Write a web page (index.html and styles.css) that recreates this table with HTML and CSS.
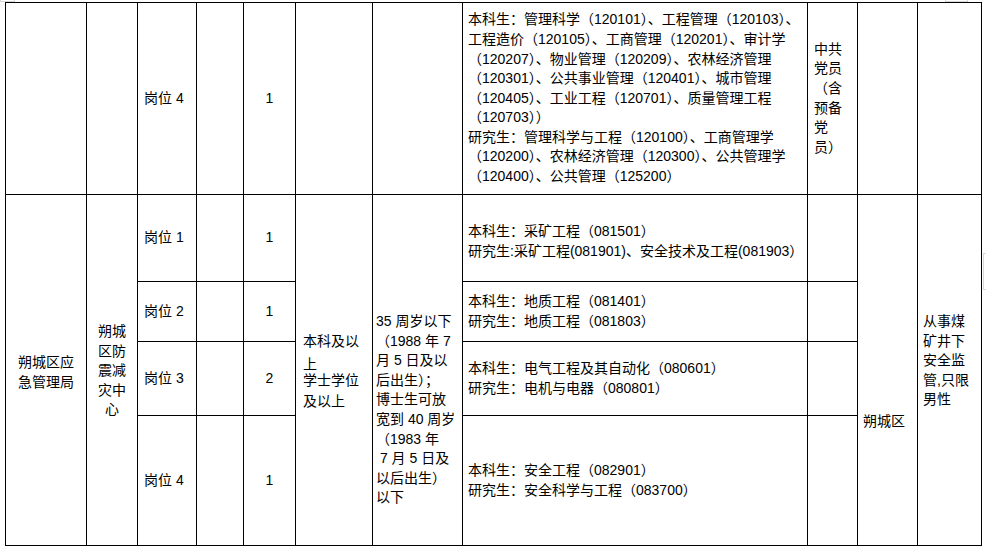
FILE: index.html
```html
<!DOCTYPE html>
<html lang="zh-CN">
<head>
<meta charset="utf-8">
<title>岗位表</title>
<link rel="stylesheet" href="styles.css">
</head>
<body>
<div class="sheet">
  <!-- row 1 -->
  <div class="cell"></div>
  <div class="cell"></div>
  <div class="cell post">岗位 4</div>
  <div class="cell"></div>
  <div class="cell num">1</div>
  <div class="cell"></div>
  <div class="cell"></div>
  <div class="cell major">本科生：管理科学（120101）、工程管理（120103）、<br>工程造价（120105）、工商管理（120201）、审计学<br>（120207）、物业管理（120209）、农林经济管理<br>（120301）、公共事业管理（120401）、城市管理<br>（120405）、工业工程（120701）、质量管理工程<br>（120703））<br>研究生：管理科学与工程（120100）、工商管理学<br>（120200）、农林经济管理（120300）、公共管理学<br>（120400）、公共管理（125200）</div>
  <div class="cell party">中共<br>党员<br>（含<br>预备<br>党<br>员）</div>
  <div class="cell"></div>
  <div class="cell"></div>

  <!-- rows 2-5 -->
  <div class="cell span4 unit">朔城区应<br>急管理局</div>
  <div class="cell span4 dept">朔城<br>区防<br>震减<br>灾中<br>心</div>
  <div class="cell post">岗位 1</div>
  <div class="cell"></div>
  <div class="cell num">1</div>
  <div class="cell span4 edu"><div class="edu-a">本科及以<br>上</div><div class="edu-b">学士学位<br>及以上</div></div>
  <div class="cell span4 age">35 周岁以下<br>（1988 年 7<br>月 5 日及以<br>后出生）；<br>博士生可放<br>宽到 40 周岁<br>（1983 年<br>&nbsp;7 月 5 日及<br>以后出生）<br>以下</div>
  <div class="cell major major-low">本科生：采矿工程（081501）<br>研究生:采矿工程(081901)、安全技术及工程(081903）</div>
  <div class="cell"></div>
  <div class="cell span4 area">朔城区</div>
  <div class="cell span4 note">从事煤<br>矿井下<br>安全监<br>管,只限<br>男性</div>

  <div class="cell post">岗位 2</div>
  <div class="cell"></div>
  <div class="cell num">1</div>
  <div class="cell major">本科生：地质工程（081401）<br>研究生：地质工程（081803）</div>
  <div class="cell"></div>

  <div class="cell post">岗位 3</div>
  <div class="cell"></div>
  <div class="cell num">2</div>
  <div class="cell major">本科生：电气工程及其自动化（080601）<br>研究生：电机与电器（080801）</div>
  <div class="cell"></div>

  <div class="cell post">岗位 4</div>
  <div class="cell"></div>
  <div class="cell num">1</div>
  <div class="cell major">本科生：安全工程（082901）<br>研究生：安全科学与工程（083700）</div>
  <div class="cell"></div>
</div>
<span class="edge edge-tl"></span>
<span class="edge edge-tr"></span>
<span class="edge edge-r"></span>
</body>
</html>
```

FILE: styles.css
```css
html, body {
  margin: 0;
  padding: 0;
  background: #fff;
}

body {
  font-family: "Liberation Sans", "Noto Sans CJK SC", sans-serif;
  font-size: 14px;
  color: #000;
}

.sheet {
  display: grid;
  width: max-content;
  margin: 2px 0 0 5px;
  padding: 1px;
  gap: 1px;
  background: #000;
  grid-template-columns: 80px 50px 58px 46px 51px 76px 89px 344px 49px 59px 63px;
  grid-template-rows: 191px 86px 59px 73px 129px;
}

.cell {
  background: #fff;
  display: flex;
  align-items: center;
  line-height: 19.6px;
  padding: 0 5px;
  white-space: nowrap;
  overflow: hidden;
}

.span4 {
  grid-row: span 4;
}

.post {
  padding-left: 6px;
}

.num {
  justify-content: center;
}

.major {
  padding-left: 5px;
  overflow: visible;
}

.major-low {
  padding-top: 7px;
}

.party {
  padding-left: 6px;
}

.unit {
  justify-content: center;
  text-align: center;
  padding-top: 5px;
}

.dept {
  justify-content: center;
  text-align: center;
  padding-top: 2px;
}

.edu {
  flex-direction: column;
  align-items: flex-start;
  justify-content: flex-start;
  padding-top: 135px;
  padding-left: 7px;
}

.edu-a {
  line-height: 23px;
}

.edu-b {
  line-height: 20.5px;
  margin-top: -6px;
}

.age {
  align-items: flex-start;
  padding-top: 117px;
  padding-left: 3px;
}

.area {
  align-items: flex-start;
  padding-top: 217px;
  padding-left: 5px;
}

.note {
  align-items: flex-start;
  padding-top: 117px;
  padding-left: 5px;
}

/* faint window-edge fragments seen at the screenshot border */
.edge {
  position: absolute;
  border: 1px solid #d8d8d8;
  box-sizing: border-box;
}

.edge-tl {
  left: 0;
  top: -1px;
  width: 15px;
  height: 3px;
}

.edge-tr {
  left: 945px;
  top: -1px;
  width: 23px;
  height: 3px;
}

.edge-r {
  left: 983px;
  top: 253px;
  width: 4px;
  height: 37px;
}
```
